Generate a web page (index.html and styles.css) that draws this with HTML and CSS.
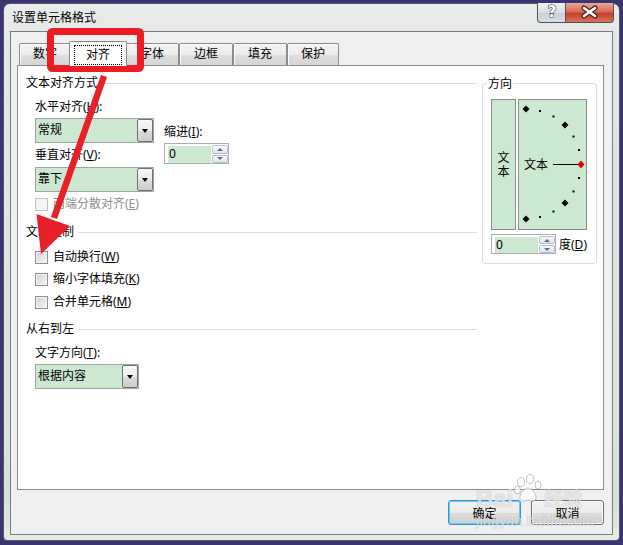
FILE: index.html
```html
<!DOCTYPE html>
<html lang="zh-CN">
<head>
<meta charset="UTF-8" />
<meta name="viewport" content="width=device-width, initial-scale=1" />
<title>设置单元格格式</title>
<link rel="stylesheet" href="styles.css">
</head>
<body>
<div class="window">
  <div class="titlebar">
    <span class="title">设置单元格格式</span>
    <div class="caps">
      <div class="cap help">
        <svg width="28" height="18" viewBox="0 0 28 18">
          <text x="14" y="14" text-anchor="middle" class="q">?</text>
        </svg>
      </div>
      <div class="cap close">
        <svg width="47" height="18" viewBox="0 0 47 18">
          <path d="M18 5 L29 13 M29 5 L18 13" stroke="#4a2622" stroke-width="5" stroke-linecap="round"/>
          <path d="M18 5 L29 13 M29 5 L18 13" stroke="#fff" stroke-width="2.6" stroke-linecap="round"/>
        </svg>
      </div>
    </div>
  </div>

  <div class="client">
    <div class="tabs">
      <div class="tab narrow">数字</div>
      <div class="tab active"><span class="focus">对齐</span></div>
      <div class="tab">字体</div>
      <div class="tab">边框</div>
      <div class="tab">填充</div>
      <div class="tab narrow">保护</div>
    </div>

    <div class="panel">
      <div class="col-left">
        <div class="gtitle">文本对齐方式</div>
        <div class="align-block">
          <div class="align-sub">
            <div class="lbl">水平对齐(<u>H</u>):</div>
            <div class="combo mt3">
              <span class="val">常规</span>
              <span class="dd"><i></i></span>
            </div>
            <div class="lbl mt4">垂直对齐(<u>V</u>):</div>
            <div class="combo mt4">
              <span class="val">靠下</span>
              <span class="dd"><i></i></span>
            </div>
          </div>
          <div class="indent-sub">
            <div class="lbl">缩进(<u>I</u>):</div>
            <div class="spin mt3">
              <span class="field">0</span>
              <span class="arrows"><b class="up"></b><b class="down"></b></span>
            </div>
          </div>
        </div>
        <div class="check disabled mt4"><span class="box"></span><span>两端分散对齐(<u>E</u>)</span></div>

        <div class="gtitle mt12">文本控制</div>
        <div class="check mt9"><span class="box"></span><span>自动换行(<u>W</u>)</span></div>
        <div class="check mt6"><span class="box"></span><span>缩小字体填充(<u>K</u>)</span></div>
        <div class="check mt7"><span class="box"></span><span>合并单元格(<u>M</u>)</span></div>

        <div class="gtitle mt11">从右到左</div>
        <div class="lbl indent mt8">文字方向(<u>T</u>):</div>
        <div class="combo short indent mt3">
          <span class="val">根据内容</span>
          <span class="dd"><i></i></span>
        </div>
      </div>

      <div class="orient">
        <div class="otitle">方向</div>
        <div class="dial-row">
          <div class="vtext">文<br>本</div>
          <div class="dial">
            <svg width="67" height="129" viewBox="0 0 67 129">
              <g fill="#000">
                <rect x="20" y="10" width="2" height="2"/>
                <rect x="33.5" y="15.5" width="2" height="2"/>
                <rect x="53.5" y="35.5" width="2" height="2"/>
                <rect x="59" y="49" width="2" height="2"/>
                <rect x="59" y="77" width="2" height="2"/>
                <rect x="53.5" y="90.5" width="2" height="2"/>
                <rect x="33.5" y="110.5" width="2" height="2"/>
                <rect x="20" y="116" width="2" height="2"/>
                <polygon points="7,5.5 10.5,9 7,12.5 3.5,9"/>
                <polygon points="46,21.5 49.5,25 46,28.5 42.5,25"/>
                <polygon points="46,99.5 49.5,103 46,106.5 42.5,103"/>
                <polygon points="7,115.5 10.5,119 7,122.5 3.5,119"/>
              </g>
              <text x="5" y="68.5" class="dial-text">文本</text>
              <line x1="34" y1="64.5" x2="59" y2="64.5" stroke="#000" stroke-width="1"/>
              <polygon points="62,60.5 65.5,64.5 62,68.5 58.5,64.5" fill="#e00000"/>
            </svg>
          </div>
        </div>
        <div class="deg-row">
          <div class="spin deg">
            <span class="field">0</span>
            <span class="arrows"><b class="up"></b><b class="down"></b></span>
          </div>
          <span class="deg-lbl">度(<u>D</u>)</span>
        </div>
      </div>
    </div>

    <div class="actions">
      <button class="btn default">确定</button>
      <button class="btn">取消</button>
    </div>
  </div>
</div>

<!-- watermark -->
<div class="watermark">
  <div class="wm-top">
    <span class="wm-bai">Bai</span>
    <svg class="paw" width="28" height="30" viewBox="0 0 28 30">
      <g fill="rgba(255,255,255,0.75)" stroke="rgba(90,90,90,0.35)" stroke-width="1">
        <ellipse cx="7" cy="8" rx="3.5" ry="4.5"/>
        <ellipse cx="16" cy="5" rx="3.5" ry="4.5"/>
        <ellipse cx="24" cy="11" rx="3" ry="4"/>
        <ellipse cx="3.5" cy="16" rx="3" ry="4"/>
        <path d="M14 14 C9 14 5 22 6 25 C7 28 11 27 14 26 C17 27 21 28 22 25 C23 22 19 14 14 14 Z"/>
      </g>
    </svg>
    <span class="wm-jy">经验</span>
  </div>
  <div class="wm-url">jingyan.baidu.com</div>
</div>

<!-- red annotation -->
<svg class="mark" width="623" height="545" viewBox="0 0 623 545">
  <rect x="50.5" y="31.5" width="90" height="37" rx="2" fill="none" stroke="#ed1c24" stroke-width="7"/>
  <line x1="104" y1="76" x2="54" y2="218" stroke="#e8202a" stroke-width="6.5"/>
  <polygon points="41,254 70,226 36.5,214" fill="#e8202a"/>
</svg>
</body>
</html>
```

FILE: styles.css
```css
* {
  box-sizing: border-box;
}
body {
  margin: 0;
  width: 623px;
  height: 545px;
  overflow: hidden;
  position: relative;
  background: #3a3470;
  font-family: "Noto Sans", "Noto Sans CJK SC", sans-serif;
  font-size: 12px;
  color: #000;
}
u {
  text-decoration: underline;
  text-underline-offset: 1px;
}

/* window frame */
.window {
  margin: 3px 0 0 3px;
  width: 617px;
  height: 538px;
  border: 1px solid #55566a;
  border-radius: 7px 7px 4px 4px;
  background: linear-gradient(#eaecec, #e3e7e5 40px, #d6e2d9 500px, #e4ece6);
  padding: 0 6px 5px 6px;
}
.titlebar {
  height: 27px;
  display: flex;
  justify-content: space-between;
  align-items: flex-start;
}
.title {
  margin: 6px 0 0 2px;
  line-height: 16px;
}
.caps {
  display: flex;
  margin: -1px -1px 0 0;
}
.cap {
  height: 20px;
  border: 1px solid #4f505e;
  border-top: none;
}
.cap svg {
  display: block;
}
.help {
  width: 28px;
  border-right: none;
  border-radius: 0 0 0 4px;
  background: linear-gradient(#eef0f3, #d9dee4 50%, #c7ced7 51%, #d8dfe6);
}
.help .q {
  font-family: "DejaVu Sans", sans-serif;
  font-size: 15px;
  font-weight: bold;
  fill: #fff;
  stroke: #4c4f5a;
  stroke-width: 1.2;
  paint-order: stroke;
}
.close {
  width: 49px;
  border-radius: 0 0 4px 0;
  background: linear-gradient(#e9a897, #d76a53 45%, #c5402b 55%, #d87456);
}

/* client area */
.client {
  height: 504px;
  border: 1px solid #7c7c7c;
  background: #f0f0f0;
  padding: 9px 8px 0 6px;
}
.tabs {
  display: flex;
  align-items: flex-end;
  height: 24px;
  padding-left: 2px;
}
.tab {
  width: 54px;
  height: 22px;
  border: 1px solid #898c95;
  border-bottom: none;
  border-radius: 2px 2px 0 0;
  background: linear-gradient(#f5f5f5, #ebebeb 50%, #dedede 51%, #d5d5d5);
  box-shadow: inset 1px 1px 0 #fcfcfc;
  text-align: center;
  line-height: 20px;
}
.tab.narrow {
  width: 52px;
}
.tab.active {
  width: 58px;
  height: 25px;
  margin: 0 -2px -1px;
  padding: 3px 4px 0;
  background: #fff;
  box-shadow: none;
  position: relative;
  z-index: 2;
}
.focus {
  display: block;
  height: 20px;
  border: 1px dotted #000;
  line-height: 18px;
}
.panel {
  height: 425px;
  border: 1px solid #898c95;
  background: #fff;
  display: flex;
  padding: 9px 0 0 8px;
}

/* left column */
.col-left {
  width: 451px;
  flex: none;
}
.gtitle {
  display: flex;
  height: 16px;
  line-height: 16px;
}
.gtitle::after {
  content: "";
  flex: 1;
  height: 1px;
  margin: 8px 0 0 5px;
  background: #d5dfe5;
}
.lbl {
  height: 16px;
  line-height: 16px;
  white-space: nowrap;
}
.indent {
  margin-left: 9px;
}
.align-block {
  display: flex;
  gap: 10px;
  margin-top: 8px;
  padding-left: 9px;
}
.align-sub {
  width: 119px;
}
.indent-sub {
  padding-top: 25px;
}
.mt3 { margin-top: 3px; }
.mt4 { margin-top: 4px; }
.mt6 { margin-top: 6px; }
.mt7 { margin-top: 7px; }
.mt8 { margin-top: 8px; }
.mt9 { margin-top: 9px; }
.mt11 { margin-top: 11px; }
.mt12 { margin-top: 12px; }

.combo {
  display: flex;
  width: 119px;
  height: 25px;
  border: 1px solid #a3a3a3;
  background: #cde8d1;
}
.combo.short {
  width: 104px;
}
.combo .val {
  flex: 1;
  padding-left: 2px;
  line-height: 22px;
}
.dd {
  width: 16px;
  border: 1px solid #707070;
  border-radius: 2px;
  background: linear-gradient(#f7f7f7, #ececec 50%, #dcdcdc 51%, #cdcdcd);
  display: flex;
  align-items: center;
  justify-content: center;
}
.dd i {
  width: 0;
  height: 0;
  border-left: 3.5px solid transparent;
  border-right: 3.5px solid transparent;
  border-top: 4px solid #000;
}

.spin {
  display: flex;
  flex: none;
  width: 65px;
  height: 21px;
  border: 1px solid #abadb3;
  background: #fff;
  padding: 2px 0 0 3px;
}
.spin.deg {
  height: 20px;
}
.spin .field {
  width: 43px;
  margin-right: 1px;
  background: #cde8d1;
  line-height: 16px;
  padding-left: 1px;
}
.arrows {
  width: 16px;
  margin-top: -1px;
  display: flex;
  flex-direction: column;
  gap: 1px;
}
.arrows b {
  flex: 1;
  border: 1px solid #b8c2cf;
  border-radius: 2px;
  background: linear-gradient(#f6f8fb, #dfe5ed);
  display: flex;
  align-items: center;
  justify-content: center;
}
.arrows b::after {
  content: "";
  width: 0;
  height: 0;
  border-left: 3px solid transparent;
  border-right: 3px solid transparent;
}
.arrows .up::after {
  border-bottom: 3px solid #5a6d8c;
}
.arrows .down::after {
  border-top: 3px solid #5a6d8c;
}

.check {
  display: flex;
  align-items: center;
  gap: 5px;
  height: 16px;
  line-height: 16px;
  padding-left: 9px;
  white-space: nowrap;
}
.check .box {
  width: 13px;
  height: 13px;
  border: 1px solid #8e8f8f;
  background: linear-gradient(135deg, #cdd0d4, #f7f7f7);
  box-shadow: inset 0 0 0 1px #f4f4f4;
}
.check.disabled {
  color: #8d8d8d;
}
.check.disabled .box {
  border-color: #c2c2c2;
  background: #f4f4f4;
}

/* orientation group */
.orient {
  flex: none;
  width: 115px;
  height: 181px;
  margin: 8px 0 0 5px;
  border: 1px solid #d5dfe5;
  border-radius: 3px;
  padding: 0 9px 0 8px;
}
.otitle {
  width: fit-content;
  height: 16px;
  line-height: 16px;
  margin: -8px 0 0 -4px;
  padding: 0 1px;
  background: #fff;
}
.dial-row {
  display: flex;
  gap: 2px;
  height: 131px;
  margin-top: 7px;
}
.vtext {
  width: 25px;
  border: 1px solid #8b8b8b;
  background: #cde8d1;
  display: flex;
  align-items: center;
  justify-content: center;
  text-align: center;
  line-height: 14px;
  padding-top: 1px;
}
.dial {
  width: 69px;
  border: 1px solid #8b8b8b;
  background: #cde8d1;
}
.dial svg {
  display: block;
}
.dial-text {
  font-size: 12px;
  font-family: "Noto Sans CJK SC", sans-serif;
}
.deg-row {
  display: flex;
  align-items: center;
  gap: 3px;
  margin-top: 4px;
  width: 110px;
}
.deg-lbl {
  white-space: nowrap;
}

/* buttons */
.actions {
  display: flex;
  justify-content: flex-end;
  gap: 10px;
  margin-top: 10px;
}
.btn {
  width: 73px;
  height: 25px;
  border: 1px solid #707070;
  border-radius: 3px;
  background: linear-gradient(#f2f2f2, #ebebeb 50%, #dddddd 51%, #cfcfcf);
  box-shadow: inset 0 0 0 1px #fbfbfb;
  font-family: inherit;
  font-size: 12px;
  color: #000;
  padding: 0;
}
.btn.default {
  border-color: #3c8fd0;
  box-shadow: inset 0 0 0 1px #5fd0fb;
}

/* overlays */
.watermark {
  position: absolute;
  left: 476px;
  top: 474px;
  color: rgba(255, 255, 255, 0.7);
  text-shadow: 0 0 1px rgba(80, 80, 80, 0.45);
  pointer-events: none;
}
.wm-top {
  display: flex;
  align-items: flex-end;
  height: 38px;
}
.wm-bai {
  font-family: "Liberation Sans", sans-serif;
  font-size: 24px;
  font-weight: bold;
  line-height: 26px;
}
.paw {
  margin: 0 2px 8px 1px;
}
.wm-jy {
  font-size: 19px;
  line-height: 26px;
  font-weight: bold;
}
.wm-url {
  font-family: "Liberation Sans", sans-serif;
  font-size: 14px;
  line-height: 16px;
  letter-spacing: 0.3px;
  margin-top: 1px;
}
.mark {
  position: absolute;
  left: 0;
  top: 0;
  pointer-events: none;
}
```
